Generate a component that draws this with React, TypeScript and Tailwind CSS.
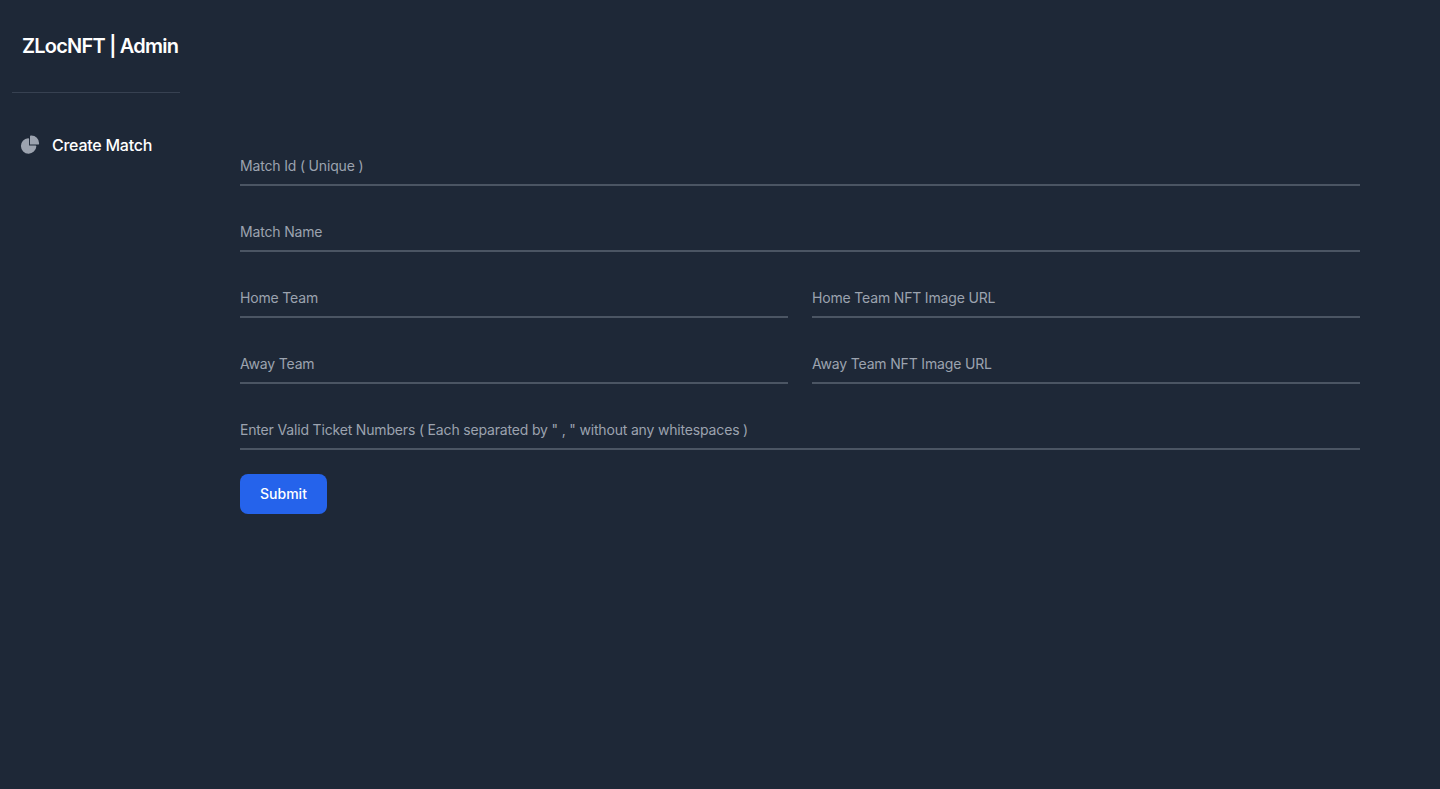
const inputClass =
  "block w-full pt-3 pb-2 px-0 text-sm tracking-[-0.17px] text-white bg-transparent border-0 border-b-2 border-[#4b5563] outline-none placeholder:text-[#9ca3af]";

const Field = ({ placeholder }: { placeholder: string }) => (
  <div className="mb-6 w-full">
    <input type="text" placeholder={placeholder} className={inputClass} />
  </div>
);

const App = () => {
  return (
    <div className="flex min-h-screen bg-[#1e2837] font-['Inter',sans-serif]">
      <aside className="w-[192px] shrink-0 px-3">
        <div className="pt-[32px] pl-[10px] pb-[32px] border-b border-[#374151]">
          <span className="block text-xl leading-7 font-semibold tracking-[-0.78px] whitespace-nowrap text-white">ZLocNFT | Admin</span>
        </div>
        <ul className="mt-[32px]">
          <li className="flex items-center h-[40px] px-2">
            <svg className="w-5 h-5 text-[#9ca3af]" fill="currentColor" viewBox="0 0 22 21">
              <path d="M16.975 11H10V4.025a1 1 0 0 0-1.066-.998 8.5 8.5 0 1 0 9.039 9.039.999.999 0 0 0-1-1.066h.002Z" />
              <path d="M12.5 0c-.157 0-.311.01-.565.027A1 1 0 0 0 11 1.02V10h8.975a1 1 0 0 0 1-.935c.013-.188.028-.374.028-.565A8.51 8.51 0 0 0 12.5 0Z" />
            </svg>
            <span className="ml-3 text-base font-medium tracking-[-0.25px] text-white">Create Match</span>
          </li>
        </ul>
      </aside>
      <main className="flex-1 pt-[144px] pl-[48px] pr-[80px]">
        <form>
          <Field placeholder="Match Id ( Unique )" />
          <Field placeholder="Match Name" />
          <div className="grid grid-cols-2 gap-6">
            <Field placeholder="Home Team" />
            <Field placeholder="Home Team NFT Image URL" />
          </div>
          <div className="grid grid-cols-2 gap-6">
            <Field placeholder="Away Team" />
            <Field placeholder="Away Team NFT Image URL" />
          </div>
          <Field placeholder={'Enter Valid Ticket Numbers ( Each separated by " , " without any whitespaces )'} />
          <button type="button" className="h-10 w-[87px] rounded-lg bg-[#2563eb] text-sm font-medium text-white">
            Submit
          </button>
        </form>
      </main>
    </div>
  );
};

export default App;
